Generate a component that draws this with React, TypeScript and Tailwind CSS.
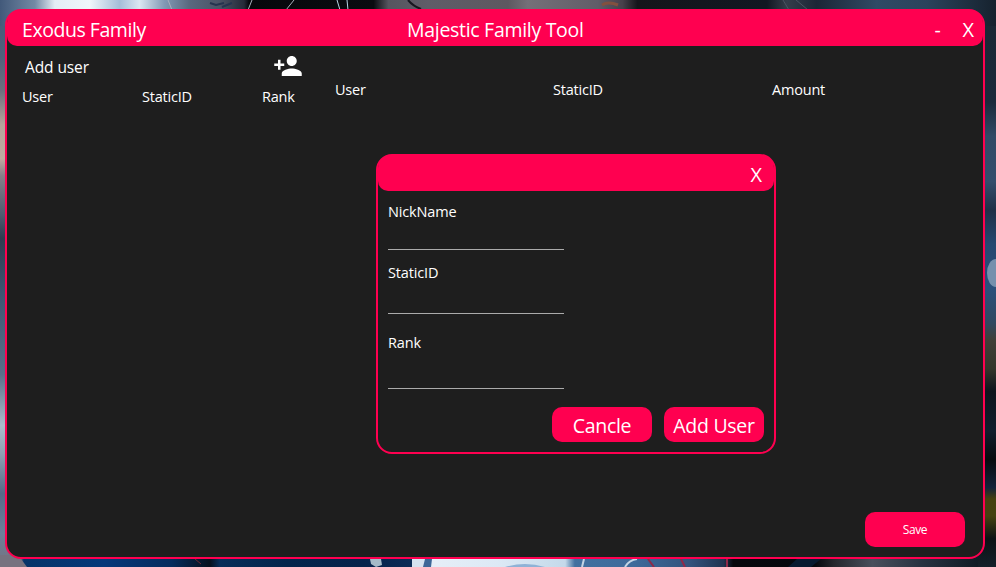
import { MdPersonAdd } from "react-icons/md";

function Wallpaper() {
  return (
    <svg className="absolute inset-0" width="996" height="567" viewBox="0 0 996 567">
      <defs>
        <linearGradient id="left" x1="0" y1="0" x2="0" y2="1">
          <stop offset="0" stopColor="#42597a" />
          <stop offset="0.1" stopColor="#4f617c" />
          <stop offset="0.16" stopColor="#6c707f" />
          <stop offset="0.22" stopColor="#b5a49b" />
          <stop offset="0.28" stopColor="#c0aaa0" />
          <stop offset="0.31" stopColor="#85808a" />
          <stop offset="0.38" stopColor="#4c5b70" />
          <stop offset="0.42" stopColor="#2c3c50" />
          <stop offset="0.52" stopColor="#3c5673" />
          <stop offset="0.66" stopColor="#58708a" />
          <stop offset="0.75" stopColor="#a9bccb" />
          <stop offset="0.8" stopColor="#8ea1b4" />
          <stop offset="0.87" stopColor="#546a89" />
          <stop offset="0.94" stopColor="#6b809b" />
          <stop offset="1" stopColor="#77727f" />
        </linearGradient>
        <linearGradient id="right" x1="0" y1="0" x2="0" y2="1">
          <stop offset="0" stopColor="#1a2733" />
          <stop offset="0.18" stopColor="#1b2a3b" />
          <stop offset="0.24" stopColor="#314a66" />
          <stop offset="0.32" stopColor="#334e6c" />
          <stop offset="0.37" stopColor="#1f3047" />
          <stop offset="0.43" stopColor="#254870" />
          <stop offset="0.51" stopColor="#2b507b" />
          <stop offset="0.57" stopColor="#304860" />
          <stop offset="0.6" stopColor="#403f38" />
          <stop offset="0.65" stopColor="#34362b" />
          <stop offset="0.69" stopColor="#0d151d" />
          <stop offset="0.76" stopColor="#111e2d" />
          <stop offset="0.81" stopColor="#070b0e" />
          <stop offset="0.86" stopColor="#13233a" />
          <stop offset="0.88" stopColor="#454110" />
          <stop offset="0.91" stopColor="#454211" />
          <stop offset="0.95" stopColor="#0c1214" />
          <stop offset="1" stopColor="#14202a" />
        </linearGradient>
        <linearGradient id="top" x1="0" y1="0" x2="1" y2="0">
          <stop offset="0" stopColor="#42597a" />
          <stop offset="0.035" stopColor="#7389a4" />
          <stop offset="0.055" stopColor="#e4edf5" />
          <stop offset="0.09" stopColor="#f0f6fb" />
          <stop offset="0.12" stopColor="#a5bdd8" />
          <stop offset="0.14" stopColor="#dbe7f2" />
          <stop offset="0.165" stopColor="#8299b5" />
          <stop offset="0.19" stopColor="#59697f" />
          <stop offset="0.22" stopColor="#4b5467" />
          <stop offset="0.245" stopColor="#252a38" />
          <stop offset="0.25" stopColor="#06070b" />
          <stop offset="0.375" stopColor="#0a0b10" />
          <stop offset="0.39" stopColor="#56555f" />
          <stop offset="0.43" stopColor="#5f5d68" />
          <stop offset="0.51" stopColor="#5d5860" />
          <stop offset="0.53" stopColor="#747078" />
          <stop offset="0.6" stopColor="#615d68" />
          <stop offset="0.625" stopColor="#47404a" />
          <stop offset="0.64" stopColor="#15151a" />
          <stop offset="0.77" stopColor="#111722" />
          <stop offset="0.79" stopColor="#353d4a" />
          <stop offset="0.82" stopColor="#1c2636" />
          <stop offset="0.88" stopColor="#304a65" />
          <stop offset="0.93" stopColor="#2b435c" />
          <stop offset="1" stopColor="#16222e" />
        </linearGradient>
        <linearGradient id="bottom" x1="0" y1="0" x2="1" y2="0">
          <stop offset="0" stopColor="#77727f" />
          <stop offset="0.003" stopColor="#696b7b" />
          <stop offset="0.006" stopColor="#063468" />
          <stop offset="0.09" stopColor="#05387a" />
          <stop offset="0.16" stopColor="#052c5d" />
          <stop offset="0.2" stopColor="#07101e" />
          <stop offset="0.21" stopColor="#082d59" />
          <stop offset="0.28" stopColor="#03254c" />
          <stop offset="0.36" stopColor="#06234b" />
          <stop offset="0.41" stopColor="#0b2b56" />
          <stop offset="0.415" stopColor="#e8eff8" />
          <stop offset="0.5" stopColor="#dce9f5" />
          <stop offset="0.57" stopColor="#c4d9ea" />
          <stop offset="0.58" stopColor="#42709f" />
          <stop offset="0.64" stopColor="#3e6b9b" />
          <stop offset="0.7" stopColor="#33537d" />
          <stop offset="0.735" stopColor="#203451" />
          <stop offset="0.745" stopColor="#06080d" />
          <stop offset="0.83" stopColor="#05080e" />
          <stop offset="0.85" stopColor="#25272d" />
          <stop offset="0.89" stopColor="#484f5c" />
          <stop offset="0.94" stopColor="#293342" />
          <stop offset="1" stopColor="#101b25" />
        </linearGradient>
      </defs>
      <rect width="30" height="567" fill="url(#left)" />
      <rect x="960" width="36" height="567" fill="url(#right)" />
      <rect width="996" height="26" fill="url(#top)" />
      <rect x="18" y="545" width="960" height="22" fill="url(#bottom)" />
      <path d="M18 555l9 12H0v-12z" fill="#77727f" />
      <ellipse cx="996" cy="273" rx="9" ry="14" fill="#7590ad" />
      <g fill="none" strokeWidth="1">
        <path d="M168 0l4 10M252 0l-4 10M294 0l-8 10" stroke="#a7b0bd" />
        <path d="M210 3l6 2 8-2M222 7l10-4" stroke="#26344f" strokeWidth="2" />
        <path d="M337 0l3 10M347 0l1 10" stroke="#b8d5e5" />
        <path d="M408 0q5 6 13 9" stroke="#17171f" strokeWidth="2" />
        <path d="M602 5q6-4 16 0" stroke="#82503f" strokeWidth="3" />
        <path d="M783 0l6 10M796 0l12 10" stroke="#4c5463" />
        <path d="M195 559l6 5" stroke="#6e2834" />
        <path d="M648 559l6 8M681 559l4 8M727 559v8" stroke="#8e2949" strokeWidth="2" />
        <path d="M625 567q4-7 12-8M584 559l-2 8" stroke="#c3d4e4" strokeWidth="2" />
      </g>
      <path d="M370 559h11l1 6-6 2-5-3z" fill="#a5bac8" />
      <path d="M412 559h13l-1 8h-12z" fill="#d5e2ef" />
      <path d="M425 559h7l-1 8h-8z" fill="#3d6697" />
      <path d="M505 567q20-6 40 0z" fill="#8fb2d6" />
      <path d="M788 567l9-8h24l-10 8z" fill="#071a30" />
    </svg>
  );
}

function Field({ label, className, gap }: { label: string; className: string; gap: string }) {
  return (
    <label className={`flex flex-col ${className}`}>
      <span className="h-5 text-[14.5px] leading-5 tracking-[-0.15px]">{label}</span>
      <input className={`w-[176px] border-b border-[#ababab] bg-transparent outline-none ${gap}`} />
    </label>
  );
}

function AddUserDialog() {
  return (
    <section className="absolute left-[376px] top-[154px] flex h-[300px] w-[400px] flex-col rounded-[16px] border-2 border-[#ff0050] bg-[#1e1e1e]">
      <header className="-mt-px flex h-9 shrink-0 items-center justify-end rounded-t-[13px] rounded-b-[10px] bg-[#ff0050] pr-[12px]">
        <button className="mt-1 text-[20px] leading-7">X</button>
      </header>
      <div className="flex flex-col pl-[10px] pt-[11px]">
        <Field label="NickName" className="h-12" gap="h-7" />
        <Field label="StaticID" className="mt-[13px] h-[51px]" gap="h-[31px]" />
        <Field label="Rank" className="mt-[19px] h-14" gap="h-9" />
      </div>
      <footer className="mt-[18px] flex justify-end gap-3 pr-[10px]">
        <button className="h-[35px] w-[100px] rounded-[10px] bg-[#ff0050] pt-0.5 text-[19.5px] tracking-[-0.3px]">Cancle</button>
        <button className="h-[35px] w-[100px] rounded-[10px] bg-[#ff0050] pt-0.5 text-[19.5px] tracking-[-0.3px]">Add User</button>
      </footer>
    </section>
  );
}

export default function App() {
  return (
    <div className="relative h-[567px] w-[996px] overflow-hidden pl-[5px] pt-[9px] font-['Open_Sans','Noto_Sans',sans-serif] text-white">
      <Wallpaper />
      <main className="relative flex h-[550px] w-[980px] flex-col rounded-[16px] border-2 border-[#ff0050] bg-[#1e1e1e]">
        <header className="-mt-px flex h-9 shrink-0 items-center rounded-t-[13px] rounded-b-[10px] bg-[#ff0050] pl-[15px] pr-[9px] text-[19.5px] leading-7">
          <h1 className="mt-1 w-[385px] tracking-[-0.45px]">Exodus Family</h1>
          <h2 className="mt-1 grow tracking-[-0.3px]">Majestic Family Tool</h2>
          <button className="mt-1 w-[28px] text-left">-</button>
          <button className="mt-1 text-[20px]">X</button>
        </header>
        <div className="flex grow">
          <aside className="w-[328px] pl-[15px] pt-[5px]">
            <div className="flex h-[36px] items-start justify-between pl-[3px] pr-[32px]">
              <span className="mt-1 text-[15.5px] leading-6 tracking-[-0.1px]">Add user</span>
              <MdPersonAdd size={30} />
            </div>
            <div className="flex text-[14.5px] leading-5 tracking-[-0.2px]">
              <span className="w-[120px]">User</span>
              <span className="w-[120px]">StaticID</span>
              <span>Rank</span>
            </div>
          </aside>
          <section className="flex grow flex-col pb-[10.5px] pr-[18px] pt-[34px]">
            <div className="flex text-[14.5px] leading-5 tracking-[-0.2px]">
              <span className="w-[218px]">User</span>
              <span className="w-[219px]">StaticID</span>
              <span>Amount</span>
            </div>
            <button className="mt-auto h-[35px] w-[100px] self-end rounded-[10px] bg-[#ff0050] pt-0.5 text-[12px] tracking-[-0.4px]">Save</button>
          </section>
        </div>
      </main>
      <AddUserDialog />
    </div>
  );
}
